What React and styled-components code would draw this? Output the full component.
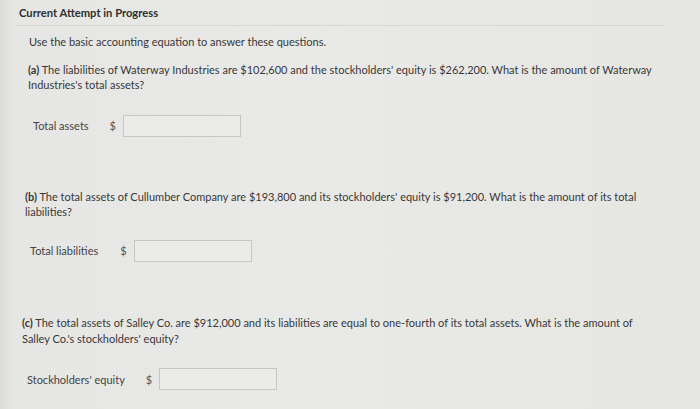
import React from 'react';
import styled, { createGlobalStyle } from 'styled-components';

const GlobalStyle = createGlobalStyle`
    body {
        margin: 0;
        background: #e7e7e5;
        font-family: Lato, "Open Sans", sans-serif;
        color: #353535;
    }
`

const Page = styled.div`
    display: flex;
    flex-direction: column;
    width: 700px;
    height: 409px;
    overflow: hidden;
    background: linear-gradient(90deg, #dcdcda 0px, #e6e6e4 14px, #e9e9e7 300px, #e6e6e3 700px);
`

const Header = styled.div`
    display: flex;
    align-items: center;
    height: 26px;
    margin-left: 16px;
    width: 649px;
    padding-left: 3px;
    box-sizing: border-box;
    border-bottom: solid 1px #d6d6d3;
    font-size: 11.2px;
    font-weight: 700;
    color: #2f2f2f;
`

const Section = styled.div`
    display: flex;
    flex-direction: column;
    padding-left: ${props => props.shift}px;
    margin-top: ${props => props.top}px;
`

const Text = styled.p`
    margin: 0;
    width: 640px;
    font-size: 11px;
    line-height: 15.6px;
    color: #383838;
`

const Tag = styled.b`
    font-weight: 700;
`

const AnswerRow = styled.div`
    display: flex;
    flex-direction: row;
    align-items: center;
    margin-top: ${props => props.top}px;
    padding-left: 5px;
`

const Label = styled.span`
    font-size: 11px;
    color: #444;
    margin-right: ${props => props.gap}px;
`

const Dollar = styled.span`
    font-size: 11px;
    color: #555;
    margin-right: 7px;
`

const Input = styled.div`
    width: 116px;
    height: 20px;
    border: solid 1px #c6c6c4;
    background: #ebebea;
`

const App = () => {
    return (
        <Page>
            <GlobalStyle />
            <Header>Current Attempt in Progress</Header>
            <Section shift={29} top={8}>
                <Text>Use the basic accounting equation to answer these questions.</Text>
            </Section>
            <Section shift={28} top={12}>
                <Text>
                    <Tag>(a)</Tag> The liabilities of Waterway Industries are $102,600 and the stockholders' equity is $262,200. What is the amount of Waterway Industries's total assets?
                </Text>
                <AnswerRow top={22}>
                    <Label gap={21}>Total assets</Label>
                    <Dollar>$</Dollar>
                    <Input />
                </AnswerRow>
            </Section>
            <Section shift={25} top={52}>
                <Text>
                    <Tag>(b)</Tag> The total assets of Cullumber Company are $193,800 and its stockholders' equity is $91,200. What is the amount of its total liabilities?
                </Text>
                <AnswerRow top={20}>
                    <Label gap={22}>Total liabilities</Label>
                    <Dollar>$</Dollar>
                    <Input />
                </AnswerRow>
            </Section>
            <Section shift={22} top={53}>
                <Text>
                    <Tag>(c)</Tag> The total assets of Salley Co. are $912,000 and its liabilities are equal to one-fourth of its total assets. What is the amount of Salley Co.'s stockholders' equity?
                </Text>
                <AnswerRow top={22}>
                    <Label gap={21}>Stockholders' equity</Label>
                    <Dollar>$</Dollar>
                    <Input />
                </AnswerRow>
            </Section>
        </Page>
    );
}

export default App;
